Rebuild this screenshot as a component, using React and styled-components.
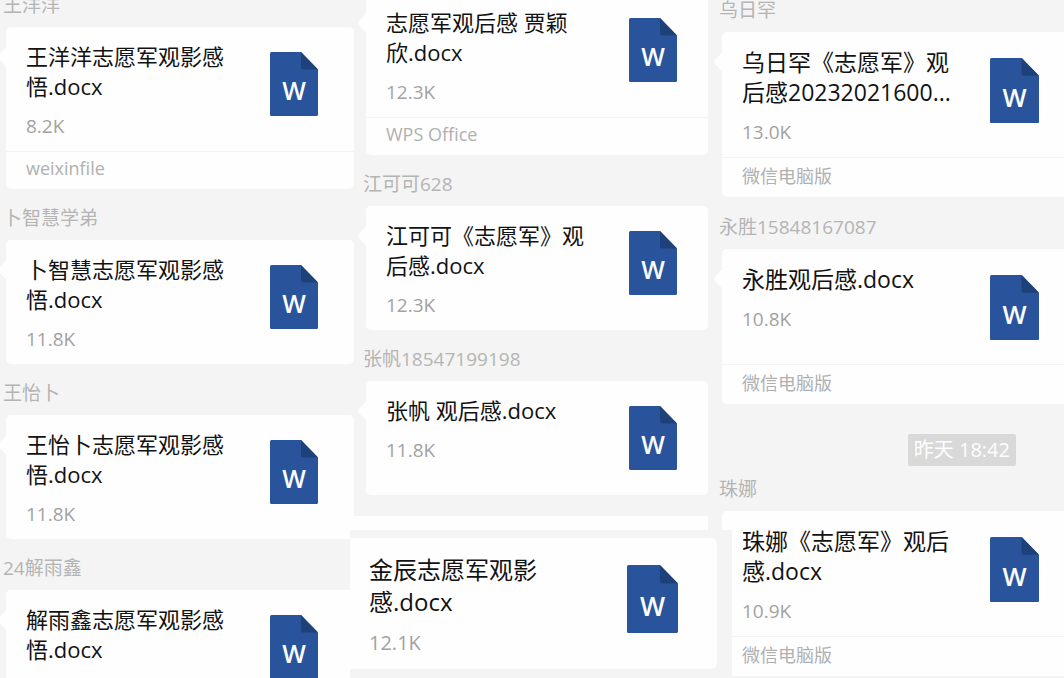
import React from "react";
import styled, { createGlobalStyle } from "styled-components";

const GlobalStyle = createGlobalStyle`
  * { box-sizing: border-box; }
  body {
    margin: 0;
    background: #f4f4f4;
    font-family: "Open Sans", "Noto Sans CJK SC", sans-serif;
  }
`;

const Page = styled.main`
  display: grid;
  grid-template-columns: 354fr 362fr 348fr;
  height: 100vh;
  overflow: hidden;
  background: #f4f4f4;
`;

const Column = styled.section`
  min-width: 0;
  padding-left: ${(p) => p.$inset || 0}px;
  margin-top: ${(p) => p.$scroll || 0}px;
`;

const Sender = styled.h2`
  margin: 0 0 9px;
  padding-left: 3px;
  font-size: 19px;
  font-weight: 400;
  line-height: 26px;
  color: #b4b4b4;
`;

const Card = styled.article`
  position: relative;
  margin: 0 ${(p) => p.$right || 0}px ${(p) => (p.$large ? 17 : 16)}px 6px;
  border-radius: ${(p) => (p.$flush ? "5px 0 0 5px" : "5px")};
  background: #fefefe;

  &::before {
    content: "";
    position: absolute;
    top: 22px;
    left: -6px;
    width: 16px;
    height: 16px;
    border-radius: 4px;
    background: #fefefe;
    transform: rotate(45deg);
  }
`;

const Body = styled.div`
  display: flex;
  justify-content: space-between;
  align-items: flex-start;
  min-height: ${(p) => (p.$large ? 115 : 114)}px;
  padding: ${(p) => (p.$large ? 15 : 14)}px ${(p) => p.$right}px 12px 20px;
`;

const Title = styled.h3`
  margin: 0 0 12px;
  max-width: ${(p) => (p.$large ? 212 : 200)}px;
  font-size: ${(p) => (p.$large ? 23 : 22)}px;
  font-weight: 400;
  line-height: 30px;
  color: #121212;
`;

const Size = styled.p`
  margin: 0;
  font-size: 19px;
  line-height: 26px;
  color: #a2a2a2;
`;

const Source = styled.footer`
  height: ${(p) => (p.$large ? 40 : 38)}px;
  padding-left: 20px;
  border-top: 1px solid #f3f3f3;
  font-size: 18px;
  line-height: ${(p) => (p.$large ? 36 : 32)}px;
  color: #b0b0b0;
`;

const Icon = styled.svg`
  flex: none;
  display: block;
  width: ${(p) => p.$width}px;
  margin-top: 11px;
`;

const TimeRow = styled.div`
  display: flex;
  justify-content: flex-end;
  padding: 13px 48px 10px 0;
`;

const Time = styled.time`
  padding: 0 6px;
  border-radius: 2px;
  background: #d9d9d9;
  color: #fefefe;
  font-size: 20px;
  line-height: 32px;
`;

const Strip = styled.div`
  height: 14px;
  margin: 21px 8px 0 -6px;
  background: #fefefe;
`;

const Inset = styled.div`
  position: relative;
  z-index: 1;
  margin: 0 -16px 0 -10px;
  padding: 8px 15px 20px 0;
  background: #f4f4f4;
`;

const InsetCard = styled.article`
  display: flex;
  justify-content: space-between;
  align-items: flex-start;
  padding: 16px 39px 13px 19px;
  border-radius: 0 6px 6px 0;
  background: #fefefe;
`;

const InsetTitle = styled(Title)`
  max-width: 180px;
  font-size: 24px;
  line-height: 32px;
`;

const InsetSize = styled(Size)`
  font-size: 20px;
`;

function WordIcon({ width = 48 }) {
  return (
    <Icon $width={width} viewBox="0 0 48 64" role="img" aria-label="Word">
      <path d="M1.5 0H31L48 17.500V62.500Q48 64 46.500 64H1.500Q0 64 0 62.500V1.500Q0 0 1.500 0Z" fill="#29549b" />
      <path d="M31 0L48 17.500H33Q31 17.500 31 15.500Z" fill="#1e4179" />
      <text x="24" y="48" textAnchor="middle" fontFamily="Open Sans" fontWeight="600" fontSize="25" fill="#fafcff">
        W
      </text>
    </Icon>
  );
}

function FileCard({ title, size, source, large, flush, right = 0, bodyRight }) {
  return (
    <Card $large={large} $flush={flush} $right={right}>
      <Body $large={large} $right={bodyRight}>
        <div>
          <Title $large={large}>{title}</Title>
          {size && <Size>{size}</Size>}
        </div>
        <WordIcon width={large ? 49 : 48} />
      </Body>
      {source && <Source $large={large}>{source}</Source>}
    </Card>
  );
}

export default function App() {
  return (
    <>
      <GlobalStyle />
      <Page>
        <Column $scroll={-8}>
          <Sender>王洋洋</Sender>
          <FileCard title="王洋洋志愿军观影感悟.docx" size="8.2K" source="weixinfile" bodyRight={36} />
          <Sender>卜智慧学弟</Sender>
          <FileCard title="卜智慧志愿军观影感悟.docx" size="11.8K" bodyRight={36} />
          <Sender>王怡卜</Sender>
          <FileCard title="王怡卜志愿军观影感悟.docx" size="11.8K" bodyRight={36} />
          <Sender>24解雨鑫</Sender>
          <FileCard title="解雨鑫志愿军观影感悟.docx" bodyRight={36} />
        </Column>

        <Column $scroll={-7} $inset={6}>
          <FileCard title="志愿军观后感 贾颖欣.docx" size="12.3K" source="WPS Office" right={8} bodyRight={31} />
          <Sender>江可可628</Sender>
          <FileCard title="江可可《志愿军》观后感.docx" size="12.3K" right={8} bodyRight={31} />
          <Sender>张帆18547199198</Sender>
          <FileCard title="张帆 观后感.docx" size="11.8K" right={8} bodyRight={31} />
          <Strip />
          <Inset>
            <InsetCard>
              <div>
                <InsetTitle>金辰志愿军观影感.docx</InsetTitle>
                <InsetSize>12.1K</InsetSize>
              </div>
              <WordIcon width={51} />
            </InsetCard>
          </Inset>
        </Column>

        <Column $scroll={-3}>
          <Sender>乌日罕</Sender>
          <FileCard large flush title="乌日罕《志愿军》观后感20232021600..." size="13.0K" source="微信电脑版" bodyRight={25} />
          <Sender>永胜15848167087</Sender>
          <FileCard large flush title="永胜观后感.docx" size="10.8K" source="微信电脑版" bodyRight={25} />
          <TimeRow>
            <Time>昨天 18:42</Time>
          </TimeRow>
          <Sender>珠娜</Sender>
          <FileCard large flush title="珠娜《志愿军》观后感.docx" size="10.9K" source="微信电脑版" bodyRight={25} />
        </Column>
      </Page>
    </>
  );
}
